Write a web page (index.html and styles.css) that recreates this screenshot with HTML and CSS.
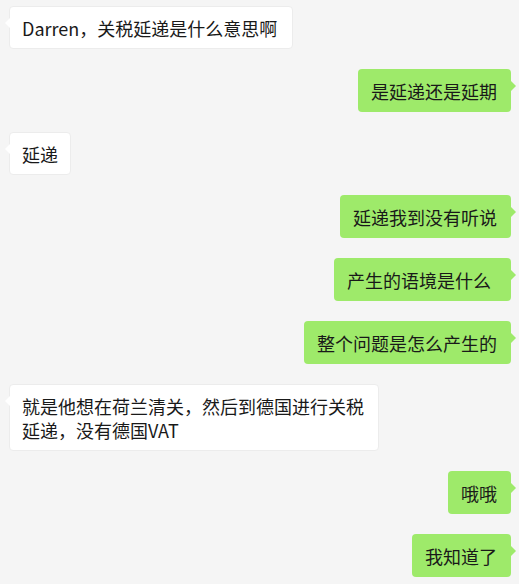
FILE: index.html
```html
<!DOCTYPE html>
<html lang="zh-CN">
<head>
<meta charset="utf-8">
<title>Chat</title>
<link rel="stylesheet" href="styles.css">
</head>
<body>
<div class="chat">
  <div class="msg left first">Darren，关税延递是什么意思啊</div>
  <div class="msg right">是延递还是延期</div>
  <div class="msg left">延递</div>
  <div class="msg right">延递我到没有听说</div>
  <div class="msg right wide">产生的语境是什么</div>
  <div class="msg right">整个问题是怎么产生的</div>
  <div class="msg left">就是他想在荷兰清关，然后到德国进行关税延递，没有德国VAT</div>
  <div class="msg right">哦哦</div>
  <div class="msg right">我知道了</div>
</div>
</body>
</html>
```
FILE: styles.css
```css
html, body {
  margin: 0;
  padding: 0;
  background: #f5f5f5;
}
body {
  font-family: "Noto Sans CJK SC", "Noto Sans", sans-serif;
  font-size: 18px;
  color: #191919;
}
.chat {
  display: flex;
  flex-direction: column;
  gap: 20px;
  padding: 6px 8px 0 9px;
}
.msg {
  position: relative;
  box-sizing: border-box;
  max-width: 370px;
  line-height: 24px;
  padding: 9.5px 13px 9.5px 12px;
  border-radius: 4px;
  word-break: break-all;
}
.msg.left {
  align-self: flex-start;
  background: #ffffff;
  border: 1px solid #ececec;
  padding: 8.5px 12px 8.5px 12px;
}
.msg.left.first {
  padding-right: 15px;
}
.msg.right {
  align-self: flex-end;
  background: #9eea6a;
  padding: 9.5px 14px 9.5px 13px;
}
.msg.right.wide {
  padding-right: 20px;
}
.msg.left::before {
  content: "";
  position: absolute;
  left: -5px;
  top: 11px;
  border-style: solid;
  border-width: 5px 5px 5px 0;
  border-color: transparent #ffffff transparent transparent;
}
.msg.right::after {
  content: "";
  position: absolute;
  right: -5px;
  top: 12px;
  border-style: solid;
  border-width: 5px 0 5px 5px;
  border-color: transparent transparent transparent #9eea6a;
}
```
